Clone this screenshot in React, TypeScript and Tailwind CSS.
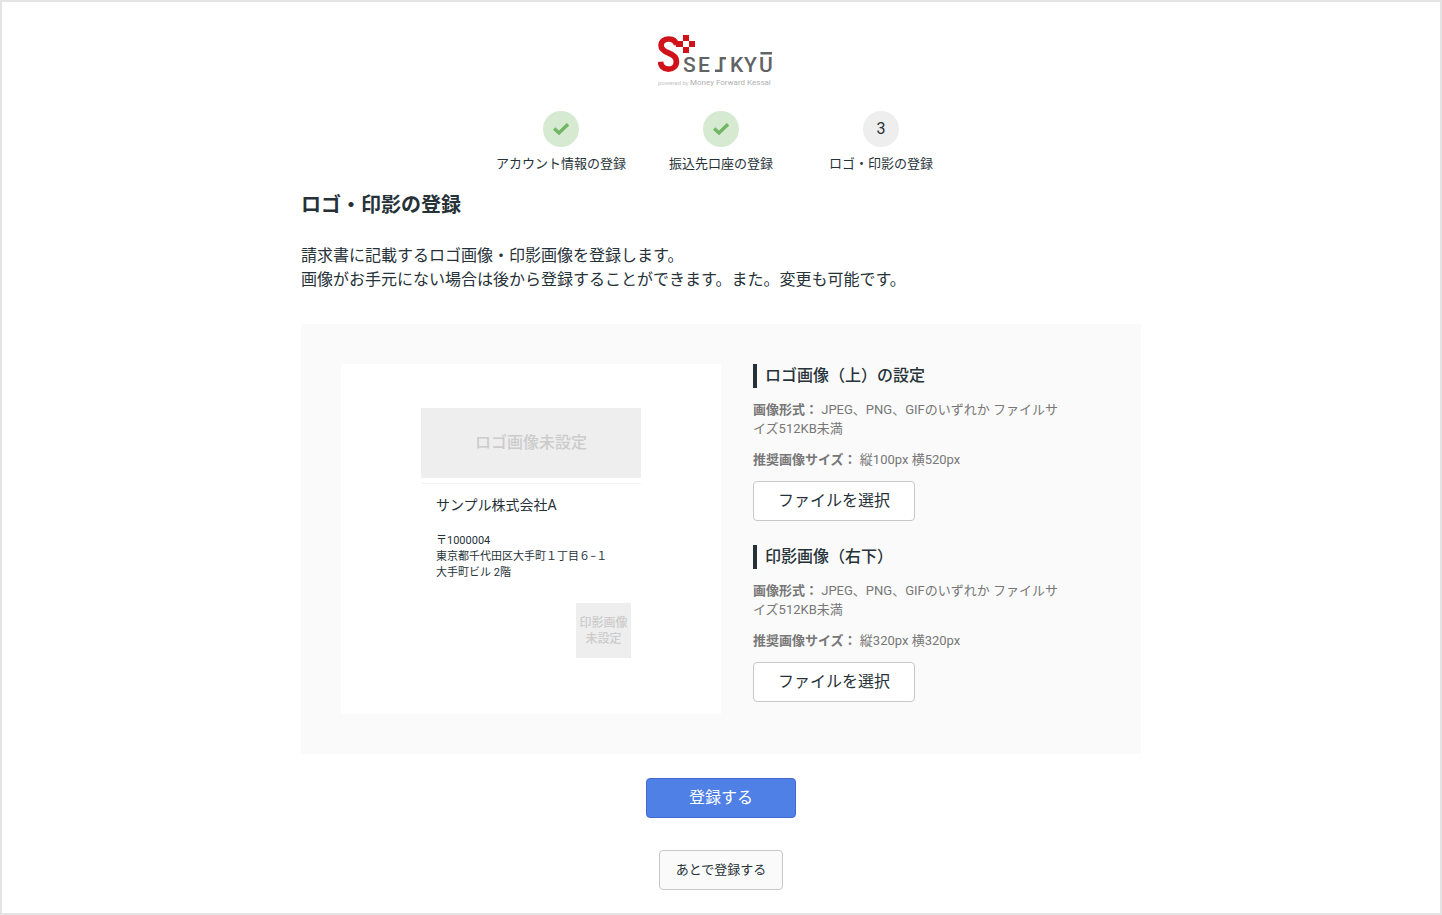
import { type FC, useRef, useState } from "react";

interface Step {
  label: string;
  done: boolean;
}

interface ImageSettingProps {
  title: string;
  size: string;
  onSelect: (url: string) => void;
}

const STEPS: Step[] = [
  { label: "アカウント情報の登録", done: true },
  { label: "振込先口座の登録", done: true },
  { label: "ロゴ・印影の登録", done: false },
];

const Logo: FC = () => (
  <svg
    width="126"
    height="53"
    viewBox="0 0 126 53"
    role="img"
    aria-label="SEIKYŪ"
  >
    {/* Mark */}
    <path
      d="M18.6 10.5C17.4 6.8 14.5 5 10.9 5C6.4 5 3.1 7.6 3.1 11.6C3.1 15.6 5.8 17.3 10.6 19C15.8 20.9 18.4 23 18.4 27.4C18.4 32 15 35.2 10.4 35.2C5.8 35.2 2.9 32.4 2.5 27.8"
      fill="none"
      stroke="#d0121b"
      strokeWidth="5.7"
    />
    <g fill="#d0121b">
      <path d="M17 7h8v6h-7z" />
      <rect x="25" y="1" width="6" height="6" />
      <rect x="31" y="7" width="6" height="6" />
      <rect x="25" y="13" width="6" height="6" />
    </g>
    {/* Wordmark */}
    <g
      fill="#616365"
      fontSize="21"
      fontWeight="500"
      className="font-['Roboto',sans-serif]"
    >
      <text x="25" y="38">S</text>
      <text x="40" y="38">E</text>
      <text x="60" y="38">I</text>
      <text x="72" y="38">K</text>
      <text x="86" y="38">Y</text>
      <text x="101" y="38">U</text>
      <rect x="62" y="23" width="6" height="2.5" />
      <rect x="57" y="35.5" width="6" height="2.5" />
      <rect x="102.5" y="18" width="11.5" height="2.5" />
    </g>
    <g fill="#b0b0b0" className="font-['Roboto',sans-serif]">
      <text x="0" y="51" fontSize="6" fill="#c4c4c4">powered by</text>
      <text x="32" y="51" fontSize="8">Money Forward Kessai</text>
    </g>
  </svg>
);

const StepItem: FC<{ step: Step; number: number }> = ({ step, number }) => (
  <li className="flex w-40 flex-col items-center gap-2">
    {step.done ? (
      <span className="flex size-9 items-center justify-center rounded-full bg-[#d5ead1]">
        <svg width="18" height="18" viewBox="0 0 18 18" aria-hidden="true">
          <path
            d="M2.2 8.4L7 13L16 4.2"
            fill="none"
            stroke="#73b566"
            strokeWidth="3.4"
          />
        </svg>
      </span>
    ) : (
      <span className="flex size-9 items-center justify-center rounded-full bg-[#eee] text-base">
        {number}
      </span>
    )}
    <span className="text-[13px] leading-[18px]">{step.label}</span>
  </li>
);

const ImageSetting: FC<ImageSettingProps> = ({ title, size, onSelect }) => {
  const inputRef = useRef<HTMLInputElement>(null);

  return (
    <section>
      <h2 className="border-l-4 border-[#263238] pl-2 text-base leading-6 font-medium">
        {title}
      </h2>
      <div className="mt-3 space-y-3 text-[13px] leading-[19px] text-[#777]">
        <p>
          <b className="font-bold">画像形式：</b> JPEG、PNG、GIFのいずれか
          ファイルサイズ512KB未満
        </p>
        <p>
          <b className="font-bold">推奨画像サイズ：</b> {size}
        </p>
      </div>
      <input
        ref={inputRef}
        type="file"
        accept="image/jpeg,image/png,image/gif"
        aria-label={title}
        className="hidden"
        onChange={(e) => {
          const file = e.target.files?.[0];
          if (file) onSelect(URL.createObjectURL(file));
        }}
      />
      <button
        type="button"
        onClick={() => inputRef.current?.click()}
        className="mt-3 h-10 rounded-[4px] border border-[#c8c8c8] bg-white px-6 text-base"
      >
        ファイルを選択
      </button>
    </section>
  );
};

const App: FC = () => {
  const [logo, setLogo] = useState("");
  const [stamp, setStamp] = useState("");

  return (
    <div className="min-h-screen border-2 border-[#e4e4e4] bg-white px-4 pt-8 pb-5 font-['Roboto','Noto_Sans_CJK_JP',sans-serif] text-[#263238]">
      <main className="mx-auto max-w-[840px]">
        <header className="flex flex-col items-center">
          <Logo />
          <ol className="mt-6 flex">
            {STEPS.map((step, i) => (
              <StepItem key={step.label} step={step} number={i + 1} />
            ))}
          </ol>
        </header>

        <h1 className="mt-4 text-xl leading-8 font-bold">ロゴ・印影の登録</h1>
        <p className="mt-[23px] text-base leading-6">
          請求書に記載するロゴ画像・印影画像を登録します。
          <br />
          画像がお手元にない場合は後から登録することができます。また。変更も可能です。
        </p>

        <div className="mt-8 flex flex-wrap gap-8 bg-[#fafafa] p-10">
          {/* Preview */}
          <div className="w-[380px] bg-white px-20 pt-11 pb-14">
            <div className="flex h-[70px] items-center justify-center bg-[#eee] text-base font-medium text-[#ccc]">
              {logo ? (
                <img src={logo} alt="" className="max-h-full" />
              ) : (
                "ロゴ画像未設定"
              )}
            </div>
            <div className="mt-[5px] border-t border-[#f2f2f2] px-[15px] pt-[11px]">
              <p className="text-sm leading-5">サンプル株式会社A</p>
              <p className="mt-[18px] text-[11px] leading-4">
                〒1000004
                <br />
                東京都千代田区大手町１丁目６−１
                <br />
                大手町ビル 2階
              </p>
            </div>
            <div className="mt-[22px] mr-[10px] ml-auto flex size-[55px] items-center justify-center bg-[#eee] text-center text-xs leading-4 font-medium text-[#ccc]">
              {stamp ? (
                <img src={stamp} alt="" className="max-h-full" />
              ) : (
                <span>
                  印影画像
                  <br />
                  未設定
                </span>
              )}
            </div>
          </div>

          {/* Settings */}
          <div className="max-w-[308px] flex-1 space-y-6">
            <ImageSetting
              title="ロゴ画像（上）の設定"
              size="縦100px 横520px"
              onSelect={setLogo}
            />
            <ImageSetting
              title="印影画像（右下）"
              size="縦320px 横320px"
              onSelect={setStamp}
            />
          </div>
        </div>

        <div className="mt-6 flex flex-col items-center gap-8">
          <button
            type="button"
            className="h-10 w-[150px] rounded-[4px] border border-[#4169d0] bg-[#4f80e6] text-base text-white"
          >
            登録する
          </button>
          <button
            type="button"
            className="h-10 rounded-[4px] border border-[#c8c8c8] bg-[#fafafa] px-4 text-[13px]"
          >
            あとで登録する
          </button>
        </div>
      </main>
    </div>
  );
};

export default App;
